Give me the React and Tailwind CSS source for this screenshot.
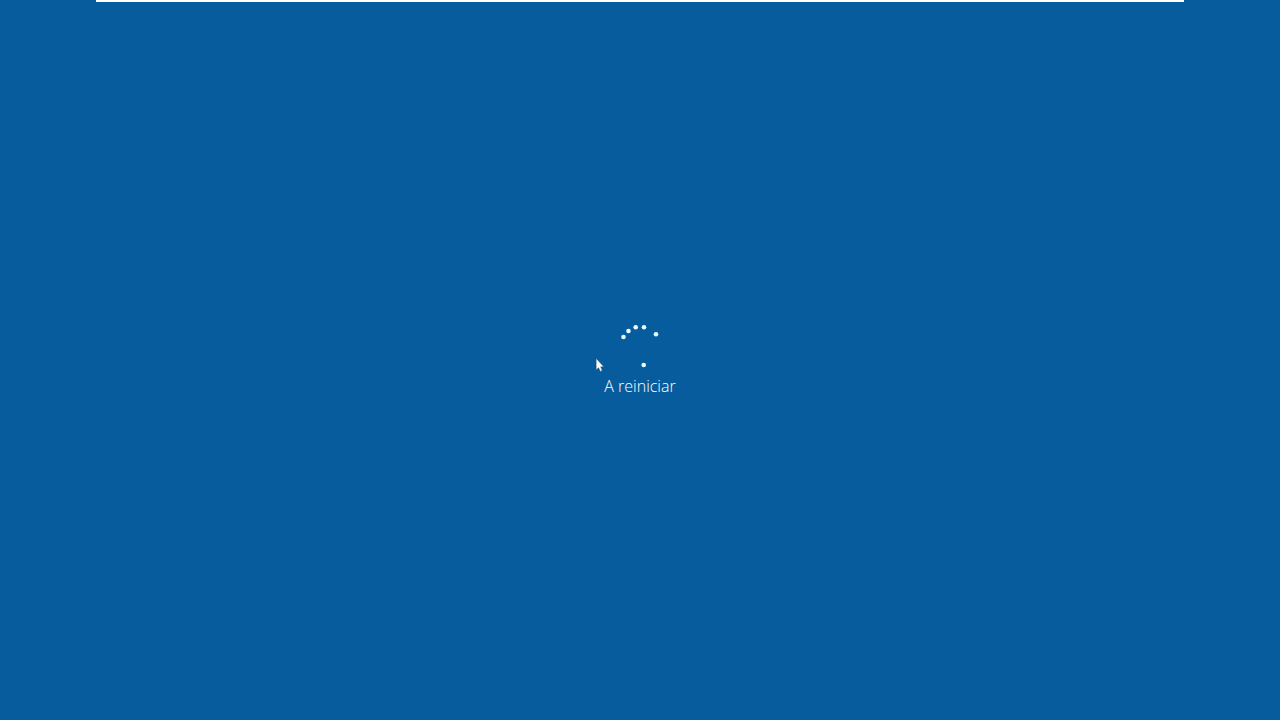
const dots = [
  [3.5, 13],
  [8.5, 7],
  [15.7, 3.3],
  [24, 3.2],
  [36, 10.3],
  [23.7, 41],
];

const Spinner = () => {
  return (
    <svg viewBox="0 0 40 44" className="h-11 w-10 fill-[#e8fcff]" aria-hidden="true">
      {dots.map(([cx, cy]) => (
        <circle key={`${cx}-${cy}`} cx={cx} cy={cy} r="2.3" />
      ))}
    </svg>
  );
};

const Cursor = () => {
  return (
    <svg viewBox="0 0 10 16" className="h-4 w-[10px]" aria-hidden="true">
      <path
        d="M2.2 0.4 V11.8 L4.6 9.7 L6.3 13.4 L8.2 12.5 L6.7 8.8 H9.8 Z"
        fill="#fff"
        stroke="#2a4470"
        strokeWidth="0.4"
      />
    </svg>
  );
};

const App = () => {
  return (
    <div className="flex min-h-screen flex-col bg-[#065c9c]">
      <div className="mx-[7.5%] h-0.5 bg-white" />

      <main className="flex flex-1 items-center justify-center">
        <div className="relative flex flex-col items-center gap-1.5" role="status">
          <Spinner />
          <p className="font-['Open_Sans','Noto_Sans',sans-serif] text-base leading-6 font-light text-white">
            A reiniciar
          </p>

          {/* Mouse pointer resting beside the spinner */}
          <div className="absolute top-[34px] right-full">
            <Cursor />
          </div>
        </div>
      </main>
    </div>
  );
};

export default App;
